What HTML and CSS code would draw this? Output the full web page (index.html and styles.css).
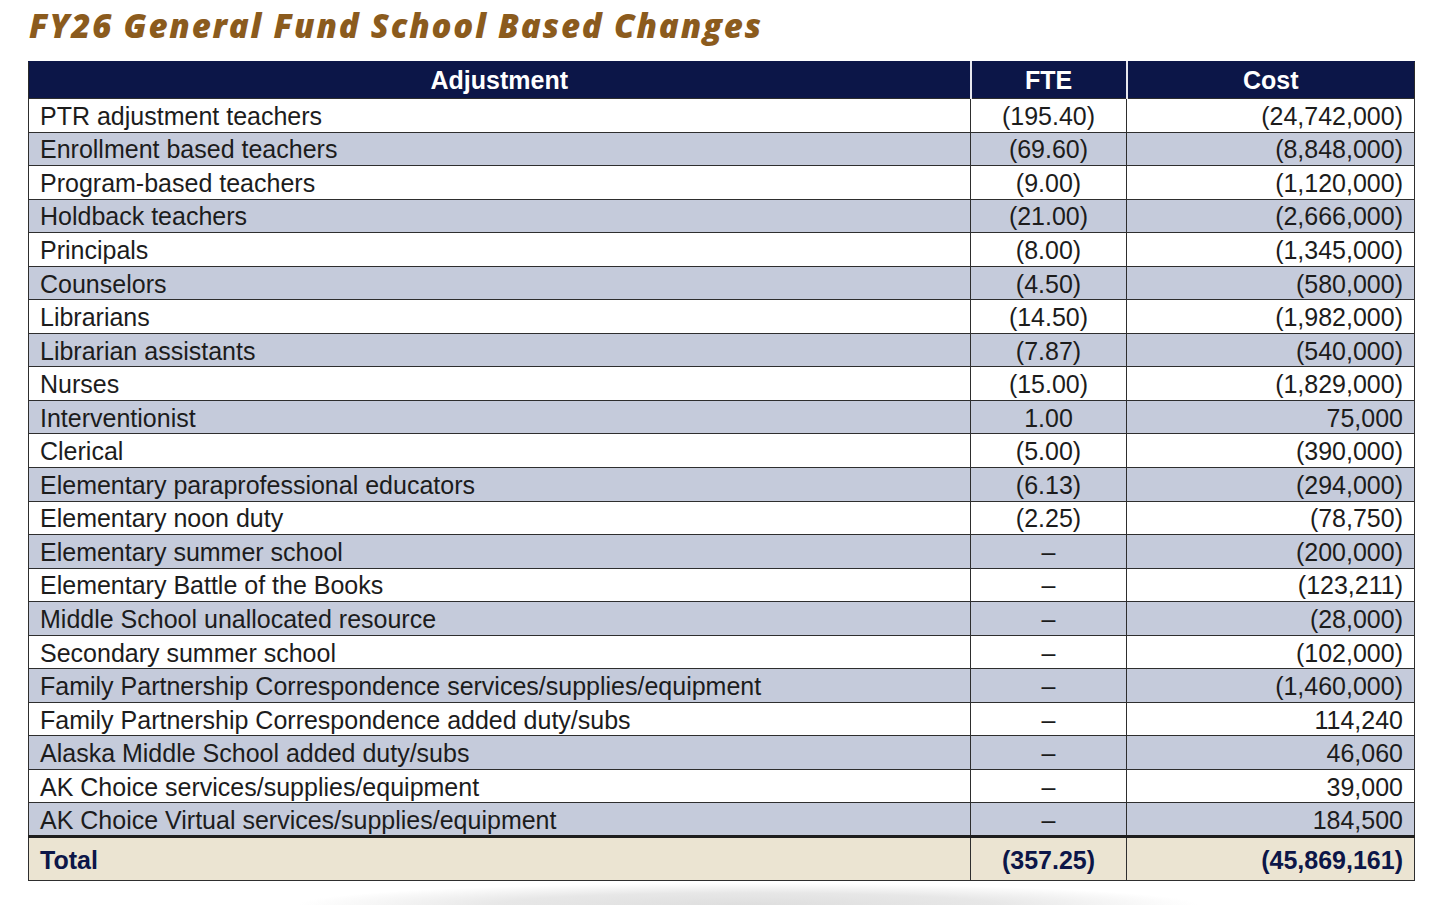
FILE: index.html
```html
<!DOCTYPE html>
<html>
<head>
<meta charset="utf-8">
<link rel="stylesheet" href="styles.css">
</head>
<body>
<div class="page">
  <h1 class="title">FY26 General Fund School Based Changes</h1>
  <div class="table-wrap">
    <table class="fund">
      <colgroup>
        <col class="c-adj">
        <col class="c-fte">
        <col class="c-cost">
      </colgroup>
      <thead>
        <tr><th>Adjustment</th><th>FTE</th><th>Cost</th></tr>
      </thead>
      <tbody>
        <tr><td>PTR adjustment teachers</td><td class="fte">(195.40)</td><td class="cost">(24,742,000)</td></tr>
        <tr><td>Enrollment based teachers</td><td class="fte">(69.60)</td><td class="cost">(8,848,000)</td></tr>
        <tr><td>Program-based teachers</td><td class="fte">(9.00)</td><td class="cost">(1,120,000)</td></tr>
        <tr><td>Holdback teachers</td><td class="fte">(21.00)</td><td class="cost">(2,666,000)</td></tr>
        <tr><td>Principals</td><td class="fte">(8.00)</td><td class="cost">(1,345,000)</td></tr>
        <tr><td>Counselors</td><td class="fte">(4.50)</td><td class="cost">(580,000)</td></tr>
        <tr><td>Librarians</td><td class="fte">(14.50)</td><td class="cost">(1,982,000)</td></tr>
        <tr><td>Librarian assistants</td><td class="fte">(7.87)</td><td class="cost">(540,000)</td></tr>
        <tr><td>Nurses</td><td class="fte">(15.00)</td><td class="cost">(1,829,000)</td></tr>
        <tr><td>Interventionist</td><td class="fte">1.00</td><td class="cost">75,000</td></tr>
        <tr><td>Clerical</td><td class="fte">(5.00)</td><td class="cost">(390,000)</td></tr>
        <tr><td>Elementary paraprofessional educators</td><td class="fte">(6.13)</td><td class="cost">(294,000)</td></tr>
        <tr><td>Elementary noon duty</td><td class="fte">(2.25)</td><td class="cost">(78,750)</td></tr>
        <tr><td>Elementary summer school</td><td class="fte">–</td><td class="cost">(200,000)</td></tr>
        <tr><td>Elementary Battle of the Books</td><td class="fte">–</td><td class="cost">(123,211)</td></tr>
        <tr><td>Middle School unallocated resource</td><td class="fte">–</td><td class="cost">(28,000)</td></tr>
        <tr><td>Secondary summer school</td><td class="fte">–</td><td class="cost">(102,000)</td></tr>
        <tr><td>Family Partnership Correspondence services/supplies/equipment</td><td class="fte">–</td><td class="cost">(1,460,000)</td></tr>
        <tr><td>Family Partnership Correspondence added duty/subs</td><td class="fte">–</td><td class="cost">114,240</td></tr>
        <tr><td>Alaska Middle School added duty/subs</td><td class="fte">–</td><td class="cost">46,060</td></tr>
        <tr><td>AK Choice services/supplies/equipment</td><td class="fte">–</td><td class="cost">39,000</td></tr>
        <tr><td>AK Choice Virtual services/supplies/equipment</td><td class="fte">–</td><td class="cost">184,500</td></tr>
      </tbody>
      <tfoot>
        <tr><td>Total</td><td class="fte">(357.25)</td><td class="cost">(45,869,161)</td></tr>
      </tfoot>
    </table>
    <div class="shadow"></div>
  </div>
</div>
</body>
</html>
```
FILE: styles.css
```css
* { box-sizing: border-box; }
html, body { margin: 0; padding: 0; background: #ffffff; }
body { width: 1440px; height: 905px; overflow: hidden; }

.page {
  padding: 4px 0 0 28px;
}

.title {
  margin: 0 0 13px 1px;
  font-family: "Open Sans", Lato, sans-serif;
  font-style: italic;
  font-weight: 800;
  font-size: 33px;
  line-height: 44px;
  color: #8b5b1d;
  letter-spacing: 1.8px;
}

.table-wrap {
  width: 1386px;
}

.fund {
  width: 1386px;
  border-collapse: collapse;
  table-layout: fixed;
  font-family: "Liberation Sans", Arial, sans-serif;
  font-size: 25px;
  color: #1c1c1c;
  border: 1.5px solid #2a2a2a;
}

.c-adj { width: 942px; }
.c-fte { width: 156px; }
.c-cost { width: 288px; }

.fund th {
  background: #0c1648;
  color: #ffffff;
  font-weight: bold;
  height: 37px;
  padding: 0;
  text-align: center;
  border-left: 2px solid #e8e8ee;
  border-top: 1px solid #0c1648;
}
.fund th:first-child { border-left: none; }

.fund td {
  height: 33.55px;
  padding: 1px 11px 0;
  border: 1px solid #2e2e2e;
  line-height: 26px;
  white-space: nowrap;
}

.fund tbody tr:nth-child(even) td { background: #c5cbdb; }

.fund td.fte { text-align: center; padding: 1px 4px 0; }
.fund td.cost { text-align: right; }

.fund tfoot td {
  background: #ebe4d2;
  color: #0c1648;
  font-weight: bold;
  height: 44px;
  border-top: 3px solid #1e1e1e;
}

.shadow {
  margin: 2px 0 0 270px;
  width: 900px;
  height: 22px;
  background: radial-gradient(ellipse 50% 100% at 50% 100%, #dedede 0%, #e7e7e7 55%, #ffffff 100%);
}
```
